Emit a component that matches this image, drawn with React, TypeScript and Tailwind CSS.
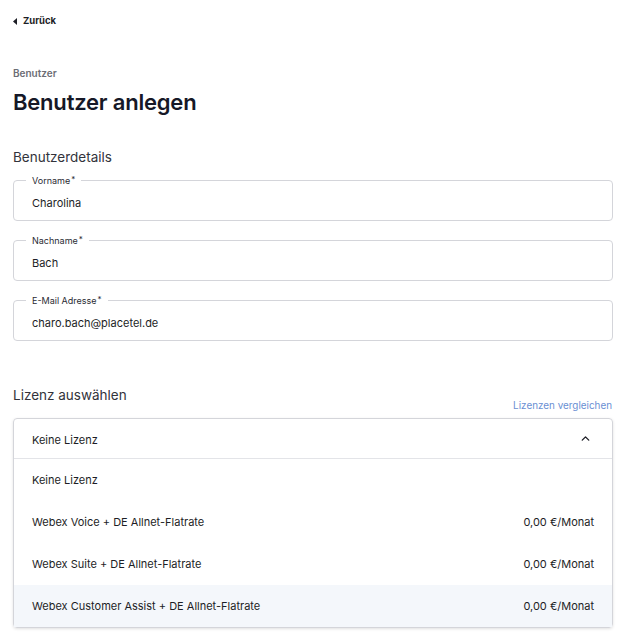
import { ChevronUp } from "lucide-react";

const fields = [
    { label: "Vorname", value: "Charolina" },
    { label: "Nachname", value: "Bach" },
    { label: "E-Mail Adresse", value: "charo.bach@placetel.de" },
];

const options = [
    { label: "Keine Lizenz", price: "" },
    { label: "Webex Voice + DE Allnet-Flatrate", price: "0,00 €/Monat" },
    { label: "Webex Suite + DE Allnet-Flatrate", price: "0,00 €/Monat" },
    { label: "Webex Customer Assist + DE Allnet-Flatrate", price: "0,00 €/Monat", active: true },
];

function OutlinedInput({ label, value }: { label: string; value: string }) {
    return (
        <div className="relative h-[41px] rounded-[4px] border border-[#d4d5da] flex items-center px-[18px]">
            <span className="absolute left-[12px] top-[-6px] bg-white px-[6px] text-[9px] leading-[12px] text-[#2a2b33]">
                {label}
                <span className="relative top-[-2px] ml-[1px] text-[8px]">*</span>
            </span>
            <span className="mt-[5px] text-[11px] text-[#1d1e26]">{value}</span>
        </div>
    );
}

export default function App() {
    return (
        <div
            className="w-[624px] bg-white pl-[13px] pr-[11px] text-[#1d1e26]"
            style={{ fontFamily: "Inter, 'Noto Sans', sans-serif" }}
        >
            {/* Back link */}
            <div className="flex h-[41px] items-center gap-[6px] pt-[2px]">
                <svg width="4" height="7" viewBox="0 0 4 7" className="fill-[#1d1e26]">
                    <path d="M4 0 L0 3.5 L4 7 Z" />
                </svg>
                <span className="text-[9.5px] font-bold">Zurück</span>
            </div>

            {/* Title */}
            <div className="mt-[25px] text-[10px] font-semibold leading-[14px] text-[#6c6d75]">Benutzer</div>
            <h1 className="mt-[7px] text-[22px] font-semibold leading-[30px] tracking-[-0.2px] text-[#161827]">
                Benutzer anlegen
            </h1>

            {/* Details */}
            <div className="mt-[31px] text-[13.5px] leading-[18px] text-[#32333b]">Benutzerdetails</div>
            <div className="mt-[14px] flex flex-col gap-[19px]">
                {fields.map((f) => (
                    <OutlinedInput key={f.label} label={f.label} value={f.value} />
                ))}
            </div>

            {/* License */}
            <div className="mt-[44px] flex items-end justify-between">
                <span className="text-[13.5px] leading-[20px] text-[#32333b]">Lizenz auswählen</span>
                <span className="mb-[-8px] mr-[1px] text-[9.9px] text-[#6a8fd3]">Lizenzen vergleichen</span>
            </div>
            <div className="mt-[13px] rounded-[4px] border border-[#d4d5da] shadow-[0_1px_3px_rgba(0,0,0,0.12)]">
                <div className="flex h-[40px] items-center justify-between border-b border-[#e3e4e8] pl-[18px] pr-[20px]">
                    <span className="mt-[3px] text-[11px]">Keine Lizenz</span>
                    <ChevronUp size={13} strokeWidth={2.5} className="text-[#1d1e26]" />
                </div>
                {options.map((o) => (
                    <div
                        key={o.label}
                        className={`flex h-[42px] items-center justify-between pl-[18px] pr-[18px] text-[11px] ${
                            o.active ? "bg-[#f4f7fb]" : "bg-white"
                        }`}
                    >
                        <span>{o.label}</span>
                        <span>{o.price}</span>
                    </div>
                ))}
            </div>
            <div className="h-[15px]" />
        </div>
    );
}
